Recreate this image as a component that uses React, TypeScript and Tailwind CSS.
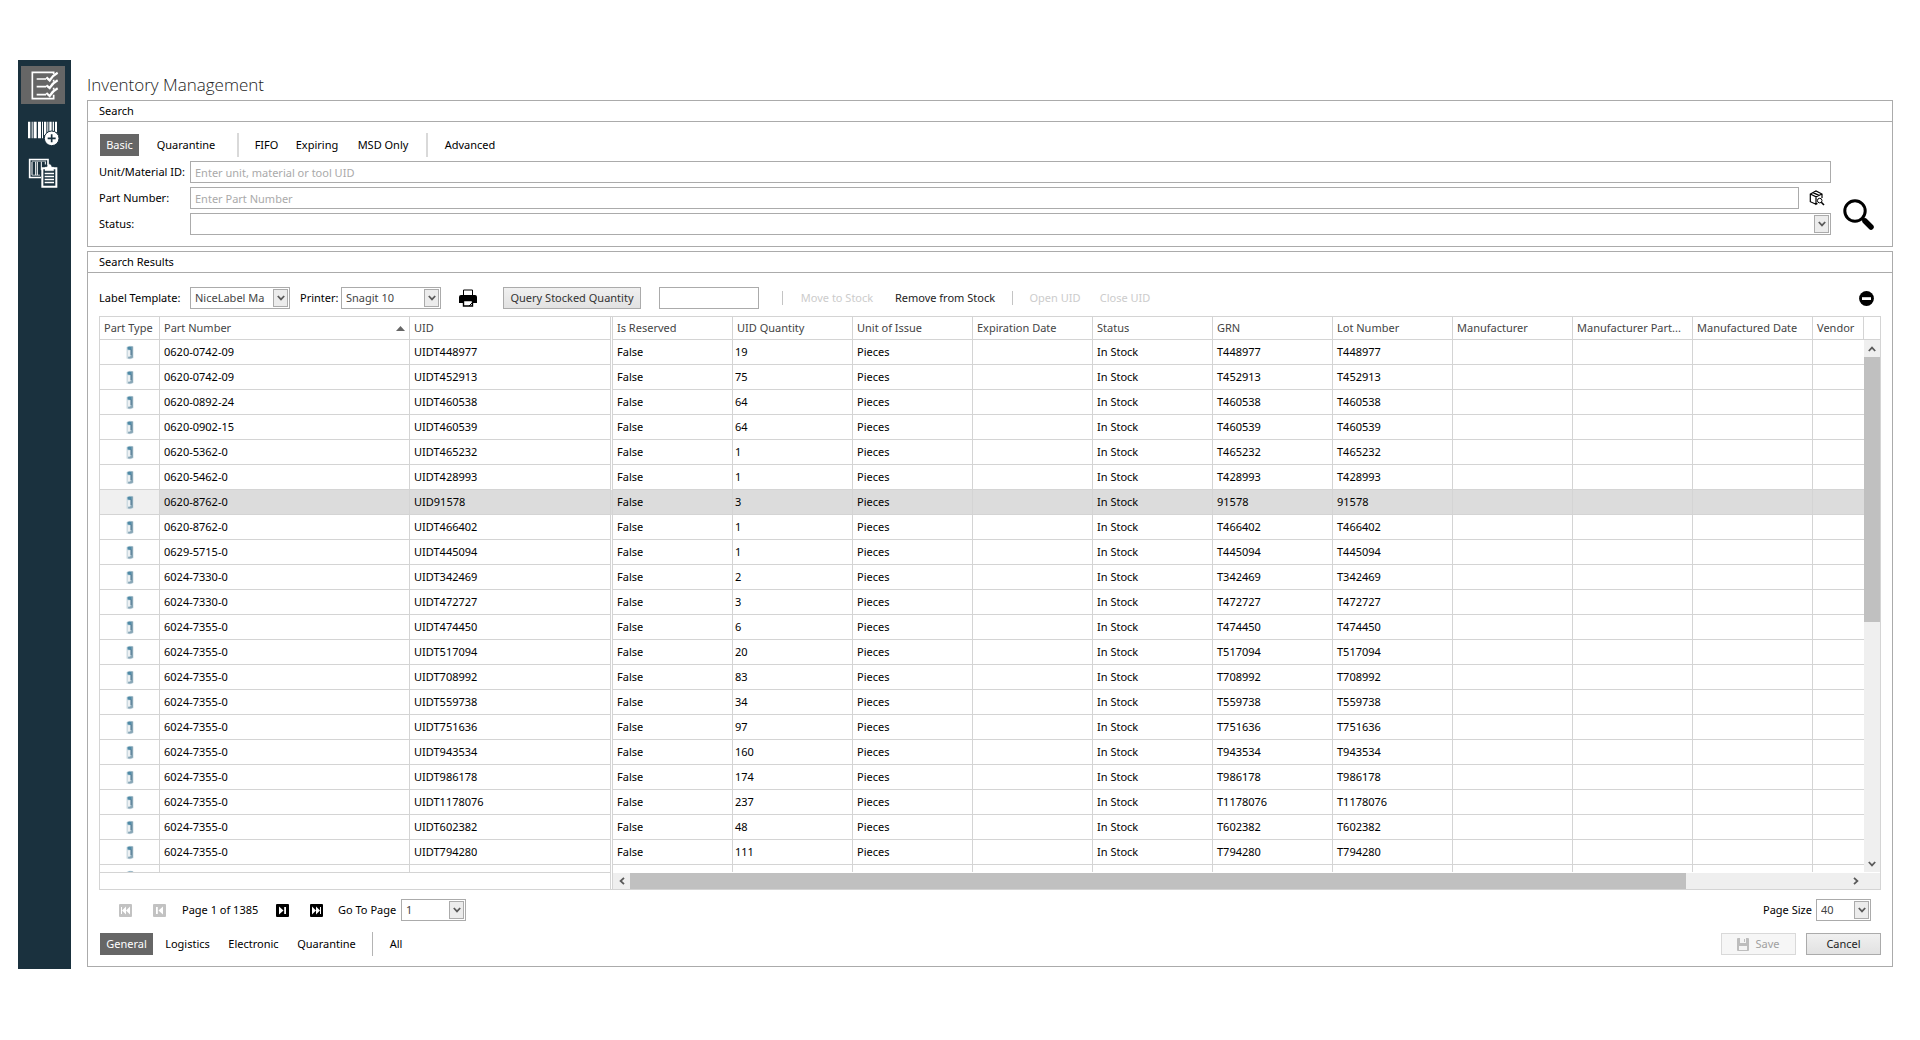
import React, { useState } from 'react';

type Row = { part: string; uid: string; qty: number };

const rows: Row[] = [
  { part: '0620-0742-09', uid: 'UIDT448977', qty: 19 },
  { part: '0620-0742-09', uid: 'UIDT452913', qty: 75 },
  { part: '0620-0892-24', uid: 'UIDT460538', qty: 64 },
  { part: '0620-0902-15', uid: 'UIDT460539', qty: 64 },
  { part: '0620-5362-0', uid: 'UIDT465232', qty: 1 },
  { part: '0620-5462-0', uid: 'UIDT428993', qty: 1 },
  { part: '0620-8762-0', uid: 'UID91578', qty: 3 },
  { part: '0620-8762-0', uid: 'UIDT466402', qty: 1 },
  { part: '0629-5715-0', uid: 'UIDT445094', qty: 1 },
  { part: '6024-7330-0', uid: 'UIDT342469', qty: 2 },
  { part: '6024-7330-0', uid: 'UIDT472727', qty: 3 },
  { part: '6024-7355-0', uid: 'UIDT474450', qty: 6 },
  { part: '6024-7355-0', uid: 'UIDT517094', qty: 20 },
  { part: '6024-7355-0', uid: 'UIDT708992', qty: 83 },
  { part: '6024-7355-0', uid: 'UIDT559738', qty: 34 },
  { part: '6024-7355-0', uid: 'UIDT751636', qty: 97 },
  { part: '6024-7355-0', uid: 'UIDT943534', qty: 160 },
  { part: '6024-7355-0', uid: 'UIDT986178', qty: 174 },
  { part: '6024-7355-0', uid: 'UIDT1178076', qty: 237 },
  { part: '6024-7355-0', uid: 'UIDT602382', qty: 48 },
  { part: '6024-7355-0', uid: 'UIDT794280', qty: 111 }
];

const scrollColumns = [
  'Is Reserved',
  'UID Quantity',
  'Unit of Issue',
  'Expiration Date',
  'Status',
  'GRN',
  'Lot Number',
  'Manufacturer',
  'Manufacturer Part...',
  'Manufactured Date'
];

const ChecklistIcon = () => (
  <svg viewBox="60 45 90 87" className="w-[30px] h-[29px]" fill="none" stroke="white">
    <path d="M131 54V49H67V128H131V116M131 77V71M131 101V95" strokeWidth="5" />
    <path d="M80 69H108M80 92H108M80 116H108" strokeWidth="5" />
    <path d="M109 64L119 73Q128 58 143 50M109 88L119 96Q128 81 143 73M109 111L119 120Q128 105 143 97" strokeWidth="7" />
  </svg>
);

const BarcodeAddIcon = () => (
  <svg viewBox="51 195 99 75" className="w-[33px] h-[25px]">
    <path
      fill="white"
      d="M54 197h7v50h-7zM65 197h3v50h-3zM71 197h9v50h-9zM84 197h9v50h-9zM96 197h3v50h-3zM102 197h7v40h-7zM112 197h3v30h-3zM118 197h7v28h-7zM128 197h4v28h-4zM135 197h6v32h-6z"
    />
    <circle cx="125" cy="247" r="22" fill="white" stroke="#1a313e" strokeWidth="3" />
    <path d="M125 235V259M113 247H137" stroke="#1a313e" strokeWidth="5" />
  </svg>
);

const ClipboardIcon = () => (
  <svg viewBox="54 309 90 92" className="w-[30px] h-[31px]" fill="none" stroke="white">
    <path d="M93 367H59V313H114V330" strokeWidth="5" />
    <path d="M66 320V360M77 320V360M82 320V360M94 320V345M106 320V328" strokeWidth="3" />
    <path d="M66 318H108M66 360H90" strokeWidth="2" />
    <path d="M97 339H139V395H97Z" fill="#1a313e" strokeWidth="6" />
    <path d="M105 347V336H111Q113 327 118 327Q123 327 125 336H131V347Z" fill="white" strokeWidth="1" />
    <path d="M104 355H132M104 364H132M104 373H132M104 382H132" strokeWidth="4" />
  </svg>
);

const PrinterIcon = () => (
  <svg viewBox="0 0 18 18" className="w-[18px] h-[18px]">
    <path d="M4.5 1H13.5V7H4.5Z" fill="white" stroke="black" />
    <path d="M2 6H16Q18 6 18 8V14H14V11H4V14H0V8Q0 6 2 6Z" fill="black" />
    <path d="M4.5 11.5H13.5V17H4.5Z" fill="white" stroke="black" strokeWidth="1.4" />
    <path d="M10 17L13 14" stroke="black" />
  </svg>
);

const CubeSearchIcon = () => (
  <svg viewBox="0 0 16 16" className="w-4 h-4" fill="none" stroke="black" strokeWidth="1.2">
    <path d="M7 14.3L1.3 11.7V4L7 1L13 4V8M1.3 4L7 6.8L13 4M7 6.8V14.3L8.5 13.5M4 2.6L10 5.4" />
    <circle cx="10.7" cy="10.6" r="2.3" fill="white" strokeWidth="1" />
    <path d="M12.3 12.3L15 15" strokeWidth="1.6" />
  </svg>
);

const SearchIcon = () => (
  <svg viewBox="0 0 31 31" className="w-[31px] h-[31px]" fill="none" stroke="black">
    <circle cx="12" cy="12" r="10.2" strokeWidth="3" />
    <path d="M19 19L22 22" strokeWidth="3" />
    <path d="M22 22L28 28" strokeWidth="5.5" strokeLinecap="round" />
  </svg>
);

const RemoveIcon = () => (
  <svg viewBox="0 0 15 15" className="w-[15px] h-[15px]">
    <circle cx="7.5" cy="7.5" r="7.4" fill="black" />
    <path d="M3 6.2H12V9H3Z" fill="white" />
  </svg>
);

const SaveIcon = () => (
  <svg viewBox="0 0 12 13" className="w-3 h-[13px]">
    <path d="M0 1Q0 0 1 0H11Q12 0 12 1V12Q12 13 11 13H1Q0 13 0 12Z" fill="#bdbdbd" />
    <path d="M3 0H9V5H3ZM2 8H10V12H2Z" fill="#f4f4f4" />
    <path d="M7 1H8V4H7Z" fill="#bdbdbd" />
  </svg>
);

const ReelIcon = () => (
  <svg viewBox="0 0 8 15" className="w-2 h-[15px] mx-auto">
    <path d="M0.5 2Q4 0 7.5 1.5V13Q5 15 0.5 13.5Z" fill="#cddbe2" />
    <path d="M5 1.5H7V12.5Q5 14 2 13.3V12.2Q5 12 5 9.5Z" fill="#88a6b6" />
    <path d="M1.5 2Q3.5 1 5.5 1.8V6Q5 4.5 1.5 4.5Z" fill="#4f8aa6" />
    <path d="M4.5 4.5H5.8V10H4.5Z" fill="#5b8199" />
    <path d="M2 5.5H4V11H2Z" fill="#edf1f3" />
  </svg>
);

const Chevron = ({ className = '' }: { className?: string }) => (
  <svg viewBox="0 0 8 6" className={`w-2 h-1.5 ${className}`} fill="none" stroke="#5a5a5a" strokeWidth="1.8">
    <path d="M0.8 1L4 4.4L7.2 1" />
  </svg>
);

const pagerShapes = {
  first: 'M2 3H3V10H2ZM7 2.5V10.5L3 6.5ZM11 2.5V10.5L7 6.5Z',
  prev: 'M3 3H4.8V10H3ZM10 2.5V10.5L5.5 6.5Z',
  next: 'M8.2 3H10V10H8.2ZM3 2.5V10.5L7.5 6.5Z',
  last: 'M10 3H11V10H10ZM6 2.5V10.5L10 6.5ZM2 2.5V10.5L6 6.5Z'
};

const PagerButton = ({ shape, label, disabled }: { shape: keyof typeof pagerShapes; label: string; disabled?: boolean }) => (
  <button type="button" aria-label={label} disabled={disabled} className="w-[13px] h-[13px]">
    <svg viewBox="0 0 13 13" className="w-[13px] h-[13px]">
      <rect width="13" height="13" rx="1" fill={disabled ? '#c2c2c2' : '#000'} />
      <path d={pagerShapes[shape]} fill="white" />
    </svg>
  </button>
);

const SelectBox = ({ id, value, className }: { id: string; value: string; className: string }) => (
  <div className={`relative h-[22px] ${className}`}>
    <select id={id} defaultValue={value} className="appearance-none w-full h-full border border-[#ababab] bg-white pl-1 pr-4 text-[#444]">
      <option value={value}>{value}</option>
    </select>
    <span className="absolute right-0.5 top-0.5 bottom-0.5 w-[15px] border border-[#ababab] bg-[#ececec] flex items-center justify-center pointer-events-none">
      <Chevron />
    </span>
  </div>
);

const Tab = ({ label, active, onClick, className }: { label: string; active: boolean; onClick: () => void; className: string }) => (
  <button
    type="button"
    onClick={onClick}
    className={`h-[22px] whitespace-nowrap ${active ? 'bg-[#666] text-white' : 'text-black'} ${className}`}
  >
    {label}
  </button>
);

const Panel = ({ title, children }: { title: string; children: React.ReactNode }) => (
  <section className="border border-[#ababab] bg-white">
    <h2 className="h-[21px] pl-[11px] leading-5 border-b border-[#ababab]">{title}</h2>
    {children}
  </section>
);

const inputStyle = 'h-[22px] border border-[#ababab] px-1 placeholder:text-[#aaa] outline-none min-w-0';
const headCell = 'h-[23px] px-1 border-r border-b border-[#d4d4d4] text-left font-normal text-[#444] whitespace-nowrap';
const bodyCell = 'h-[25px] px-1 border-r border-b border-[#d4d4d4] whitespace-nowrap';

const App: React.FC = () => {
  const [searchTab, setSearchTab] = useState('Basic');
  const [viewTab, setViewTab] = useState('General');
  const [selected, setSelected] = useState(6);

  return (
    <div className="flex pt-[60px] pl-[18px] pr-[27px] bg-white text-black text-[11px] leading-4 font-['Noto_Sans','Open_Sans',sans-serif]">
      <nav className="w-[53px] shrink-0 bg-[#1a313e] pl-[3px] pt-1.5 flex flex-col">
        <button type="button" aria-label="Inventory" className="w-11 h-[38px] pl-1 bg-[#666] flex items-center justify-center">
          <ChecklistIcon />
        </button>
        <button type="button" aria-label="Add material" className="w-11 h-[38px] mt-2.5 flex items-center justify-center">
          <BarcodeAddIcon />
        </button>
        <button type="button" aria-label="Reports" className="w-11 h-[38px] mt-0.5 flex items-center justify-center">
          <ClipboardIcon />
        </button>
      </nav>

      <main className="ml-4 flex-1 min-w-0 pb-0.5">
        <h1 className="h-10 pt-[13px] text-[17px] leading-6 font-light text-[#222] font-['Open_Sans',sans-serif]">Inventory Management</h1>

        <Panel title="Search">
          <div className="pt-[11px] pb-[11px] pl-[11px]">
            <div className="flex items-center h-6 pl-px">
              <Tab label="Basic" active={searchTab === 'Basic'} onClick={() => setSearchTab('Basic')} className="w-[39px]" />
              <Tab label="Quarantine" active={searchTab === 'Quarantine'} onClick={() => setSearchTab('Quarantine')} className="w-[70px] ml-3" />
              <span className="w-0.5 h-6 ml-4 mr-2.5 bg-[#d9d9d9]" />
              <Tab label="FIFO" active={searchTab === 'FIFO'} onClick={() => setSearchTab('FIFO')} className="w-[35px]" />
              <Tab label="Expiring" active={searchTab === 'Expiring'} onClick={() => setSearchTab('Expiring')} className="w-[54px] ml-1.5" />
              <Tab label="MSD Only" active={searchTab === 'MSD Only'} onClick={() => setSearchTab('MSD Only')} className="w-[66px] ml-1.5" />
              <span className="w-0.5 h-6 mx-2.5 bg-[#d9d9d9]" />
              <Tab label="Advanced" active={searchTab === 'Advanced'} onClick={() => setSearchTab('Advanced')} className="w-[64px]" />
            </div>

            <form className="flex mt-1" onSubmit={(e) => e.preventDefault()}>
              <div className="flex-1 min-w-0 flex flex-col gap-1">
                <div className="flex items-center">
                  <label htmlFor="unit" className="w-[91px] shrink-0">Unit/Material ID:</label>
                  <input id="unit" type="text" placeholder="Enter unit, material or tool UID" className={`${inputStyle} flex-1`} />
                </div>
                <div className="flex items-center">
                  <label htmlFor="part" className="w-[91px] shrink-0">Part Number:</label>
                  <input id="part" type="text" placeholder="Enter Part Number" className={`${inputStyle} flex-1`} />
                  <button type="button" aria-label="Browse parts" className="w-8 pl-1 flex justify-center">
                    <CubeSearchIcon />
                  </button>
                </div>
                <div className="flex items-center">
                  <label htmlFor="status" className="w-[91px] shrink-0">Status:</label>
                  <SelectBox id="status" value="" className="flex-1" />
                </div>
              </div>
              <button type="submit" aria-label="Search" className="w-[61px] pl-3 pb-[5px] flex items-end">
                <SearchIcon />
              </button>
            </form>
          </div>
        </Panel>

        <div className="h-1" />

        <Panel title="Search Results">
          <div className="pt-3.5 px-[11px] pb-[11px]">
            {/* Toolbar */}
            <div className="flex items-center h-[22px]">
              <label htmlFor="template" className="w-[91px]">Label Template:</label>
              <SelectBox id="template" value="NiceLabel Ma" className="w-[100px]" />
              <label htmlFor="printer" className="w-[41px] ml-2.5">Printer:</label>
              <SelectBox id="printer" value="Snagit 10" className="w-[100px]" />
              <button type="button" aria-label="Print" className="ml-[18px]">
                <PrinterIcon />
              </button>
              <button type="button" className="ml-[26px] w-[138px] h-[22px] border border-[#ababab] bg-gradient-to-b from-[#f0f0f0] to-[#e2e2e2] text-[#333]">
                Query Stocked Quantity
              </button>
              <input type="text" aria-label="Stocked quantity" className={`${inputStyle} w-[100px] ml-[18px]`} />
              <span className="w-px h-3.5 ml-[23px] bg-[#c4c4c4]" />
              <button type="button" disabled className="ml-4 w-[76px] text-[#ccc]">Move to Stock</button>
              <button type="button" className="ml-[18px] w-[104px] text-[#222]">Remove from Stock</button>
              <span className="w-px h-3.5 ml-[15px] bg-[#c4c4c4]" />
              <button type="button" disabled className="ml-4 w-[52px] text-[#ccc]">Open UID</button>
              <button type="button" disabled className="ml-[18px] w-[52px] text-[#ccc]">Close UID</button>
              <button type="button" aria-label="Remove" className="ml-auto mr-[7px]">
                <RemoveIcon />
              </button>
            </div>

            {/* Results grid */}
            <div className="mt-[7px] border border-[#d4d4d4]">
              <div className="flex h-[555px] overflow-hidden">
                <div className="flex-1 min-w-0 overflow-hidden">
                  <table className="w-full table-fixed border-separate border-spacing-0">
                    <colgroup>
                      <col className="w-[60px]" />
                      <col className="w-[250px]" />
                      <col className="w-[201px]" />
                      <col className="w-[2px]" />
                      {scrollColumns.map((name) => (
                        <col key={name} className="w-[120px]" />
                      ))}
                      <col />
                    </colgroup>
                    <thead>
                      <tr>
                        <th className={headCell}>Part Type</th>
                        <th className={headCell}>
                          <span className="flex items-center justify-between">
                            Part Number
                            <svg viewBox="0 0 9 5" className="w-[9px] h-[5px]">
                              <path d="M0 5L4.5 0L9 5Z" fill="#666" />
                            </svg>
                          </span>
                        </th>
                        <th className={headCell}>UID</th>
                        <td className="border-r border-[#d4d4d4]" />
                        {scrollColumns.map((name) => (
                          <th key={name} className={headCell}>{name}</th>
                        ))}
                        <th className={headCell}>Vendor</th>
                      </tr>
                    </thead>
                    <tbody>
                      {rows.map((row, index) => {
                        const lot = row.uid.replace('UID', '');
                        return (
                          <tr key={row.uid} onClick={() => setSelected(index)} className={index === selected ? 'bg-[#dcdcdc]' : ''}>
                            <td className={`${bodyCell} ${index === selected ? 'bg-[#f0f0f0]' : ''}`}>
                              <ReelIcon />
                            </td>
                            <td className={bodyCell}>{row.part}</td>
                            <td className={bodyCell}>{row.uid}</td>
                            <td className="border-r border-[#d4d4d4]" />
                            <td className={bodyCell}>False</td>
                            <td className="h-[25px] px-0.5 border-r border-b border-[#d4d4d4]">{row.qty}</td>
                            <td className={bodyCell}>Pieces</td>
                            <td className={bodyCell} />
                            <td className={bodyCell}>In Stock</td>
                            <td className={bodyCell}>{lot}</td>
                            <td className={bodyCell}>{lot}</td>
                            <td className={bodyCell} />
                            <td className={bodyCell} />
                            <td className={bodyCell} />
                            <td className="h-[25px] border-b border-[#d4d4d4]" />
                          </tr>
                        );
                      })}
                      <tr>
                        <td className={bodyCell}>
                          <ReelIcon />
                        </td>
                        <td className={bodyCell} />
                        <td className={bodyCell} />
                        <td className="border-r border-[#d4d4d4]" />
                        {scrollColumns.map((name) => (
                          <td key={name} className={bodyCell} />
                        ))}
                        <td />
                      </tr>
                    </tbody>
                  </table>
                </div>
                <div className="w-4 shrink-0 flex flex-col">
                  <div className="h-[23px] border-b border-[#d4d4d4]" />
                  <div className="flex-1 bg-[#efefef] flex flex-col items-center">
                    <button type="button" aria-label="Scroll up" className="h-[17px] flex items-center">
                      <Chevron className="rotate-180" />
                    </button>
                    <div className="w-full h-[265px] bg-[#c0c0c0]" />
                    <button type="button" aria-label="Scroll down" className="h-[17px] mt-auto flex items-center">
                      <Chevron />
                    </button>
                  </div>
                </div>
              </div>

              <div className="flex h-[17px]">
                <div className="w-[511px] shrink-0 border-t border-r border-[#d4d4d4]" />
                <div className="flex-1 ml-px border-l border-[#d4d4d4] pt-px flex">
                  <div className="flex-1 bg-[#efefef] flex items-center">
                    <button type="button" aria-label="Scroll left" className="w-[17px] flex justify-center">
                      <Chevron className="rotate-90" />
                    </button>
                    <div className="flex-[105] h-full bg-[#c0c0c0]" />
                    <div className="flex-[16]" />
                    <button type="button" aria-label="Scroll right" className="w-[17px] flex justify-center">
                      <Chevron className="-rotate-90" />
                    </button>
                  </div>
                  <div className="w-4 bg-[#efefef]" />
                </div>
              </div>
            </div>

            {/* Pager */}
            <div className="mt-[9px] pl-5 pr-2.5 flex items-center h-[22px]">
              <PagerButton shape="first" label="First page" disabled />
              <span className="w-[21px]" />
              <PagerButton shape="prev" label="Previous page" disabled />
              <span className="ml-4 w-[94px]">Page 1 of 1385</span>
              <PagerButton shape="next" label="Next page" />
              <span className="w-[21px]" />
              <PagerButton shape="last" label="Last page" />
              <label htmlFor="goto" className="ml-[15px] w-[63px]">Go To Page</label>
              <SelectBox id="goto" value="1" className="w-[65px]" />
              <label htmlFor="size" className="ml-auto w-[53px]">Page Size</label>
              <SelectBox id="size" value="40" className="w-[55px]" />
            </div>

            {/* Column views and actions */}
            <div className="mt-3 pl-px flex items-center h-[22px]">
              <Tab label="General" active={viewTab === 'General'} onClick={() => setViewTab('General')} className="w-[53px]" />
              <Tab label="Logistics" active={viewTab === 'Logistics'} onClick={() => setViewTab('Logistics')} className="w-[57px] ml-1.5" />
              <Tab label="Electronic" active={viewTab === 'Electronic'} onClick={() => setViewTab('Electronic')} className="w-[63px] ml-1.5" />
              <Tab label="Quarantine" active={viewTab === 'Quarantine'} onClick={() => setViewTab('Quarantine')} className="w-[71px] ml-1.5" />
              <span className="w-px h-6 mx-2.5 bg-[#b4b4b4]" />
              <Tab label="All" active={viewTab === 'All'} onClick={() => setViewTab('All')} className="w-[26px]" />
              <button type="button" disabled className="ml-auto w-[75px] h-[22px] border border-[#d9d9d9] bg-[#f6f6f6] text-[#a0a0a0] flex items-center justify-center gap-1.5">
                <SaveIcon />
                Save
              </button>
              <button type="button" className="ml-2.5 w-[75px] h-[22px] border border-[#ababab] bg-gradient-to-b from-[#f0f0f0] to-[#e2e2e2] text-[#222]">
                Cancel
              </button>
            </div>
          </div>
        </Panel>
      </main>
    </div>
  );
};

export default App;
